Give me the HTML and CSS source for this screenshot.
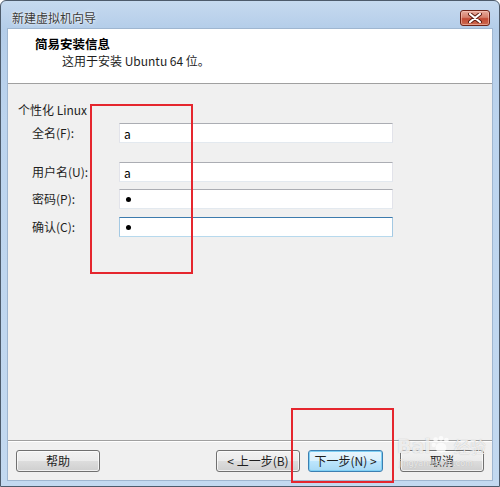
FILE: index.html
```html
<!DOCTYPE html>
<html lang="zh-CN">
<head>
<meta charset="utf-8">
<title>新建虚拟机向导</title>
<link rel="stylesheet" href="styles.css">
</head>
<body>
<div class="window">
  <div class="titlebar">
    <span class="title">新建虚拟机向导</span>
    <div class="close">
      <svg width="14" height="10" viewBox="0 0 14 10">
        <path d="M2 1 L12 9 M12 1 L2 9" stroke="#5a1a10" stroke-width="4" stroke-linecap="round"/>
        <path d="M2 1 L12 9 M12 1 L2 9" stroke="#ffffff" stroke-width="2.2" stroke-linecap="round"/>
      </svg>
    </div>
  </div>
  <div class="client">
    <div class="header">
      <div class="h-title">简易安装信息</div>
      <div class="h-sub">这用于安装 Ubuntu 64 位。</div>
    </div>
    <div class="content">
      <div class="group">个性化 Linux</div>
      <div class="form">
        <div class="row">
          <label class="lbl">全名(F):</label>
          <div class="field">a</div>
        </div>
        <div class="row row-wide">
          <label class="lbl">用户名(U):</label>
          <div class="field">a</div>
        </div>
        <div class="row">
          <label class="lbl">密码(P):</label>
          <div class="field"><span class="dot"></span></div>
        </div>
        <div class="row row-8">
          <label class="lbl">确认(C):</label>
          <div class="field focus"><span class="dot"></span></div>
        </div>
      </div>
    </div>
    <div class="footer">
      <button class="btn btn-help">帮助</button>
      <span class="spacer"></span>
      <button class="btn btn-back">&lt; 上一步(B)</button>
      <button class="btn btn-next">下一步(N) &gt;</button>
      <button class="btn btn-cancel">取消</button>
    </div>
  </div>
  <div class="mark mark-a"></div>
  <div class="mark mark-b"></div>
  <div class="watermark">
    <div class="wm-line">
      <span class="wm-big">Bai</span>
      <svg class="paw" width="20" height="18" viewBox="0 0 22 20">
        <circle cx="5" cy="4" r="2.6"/><circle cx="11" cy="2.6" r="2.6"/><circle cx="17" cy="4.5" r="2.6"/>
        <circle cx="3" cy="10" r="2.4"/><ellipse cx="11" cy="13" rx="6" ry="5.5"/>
      </svg>
      <span class="wm-cn">经验</span>
    </div>
    <div class="wm-url">jingyan.baidu.com</div>
  </div>
</div>
</body>
</html>
```

FILE: styles.css
```css
* { box-sizing: border-box; }
html, body {
  margin: 0;
  padding: 0;
  background: #ffffff;
}
body {
  font-family: "Noto Sans CJK SC", "DejaVu Sans", sans-serif;
  font-size: 12px;
  color: #1e1e1e;
}
.window {
  position: relative;
  width: 500px;
  height: 487px;
  border: 1px solid #4d5b6b;
  border-radius: 6px 6px 0 0;
  background: linear-gradient(to bottom, #c6daef 0px, #b4cde9 28px, #bcd4ee 120px, #c3d9f0 487px);
  padding: 0 7px 6px 7px;
  display: flex;
  flex-direction: column;
  overflow: hidden;
}
.titlebar {
  height: 28px;
  display: flex;
  justify-content: space-between;
  align-items: flex-start;
}
.title {
  padding: 9px 0 0 4px;
  line-height: 16px;
  font-size: 12px;
  color: #3a3a3a;
  text-shadow: 0 0 4px #e8f0f8, 0 0 2px #ffffff;
}
.close {
  margin: 9px 2px 0 0;
  width: 30px;
  height: 16px;
  border: 1px solid #6e2418;
  border-radius: 3px;
  background: linear-gradient(to bottom, #e7ab9c 0%, #d6806c 45%, #c24a34 55%, #cd6a4f 100%);
  box-shadow: inset 0 0 0 1px rgba(255,210,200,0.5);
  display: flex;
  align-items: center;
  justify-content: center;
}
.client {
  flex: 1;
  display: flex;
  flex-direction: column;
  background: #f0f0f0;
  outline: 1px solid #9fb6d0;
}
.header {
  height: 55px;
  background: #ffffff;
  border-bottom: 1px solid #a0a0a0;
  padding-top: 7px;
}
.h-title {
  padding-left: 27px;
  line-height: 16px;
  font-size: 12.5px;
  font-weight: bold;
  color: #000;
}
.h-sub {
  padding-left: 54px;
  margin-top: 1px;
  line-height: 16px;
  color: #1e1e1e;
}
.content {
  padding: 18px 0 0 10px;
}
.group {
  line-height: 16px;
  color: #1e1e1e;
}
.form {
  margin: 5px 0 0 14px;
}
.row {
  display: grid;
  grid-template-columns: 87px 274px;
  align-items: center;
  height: 20px;
}
.row + .row { margin-top: 7px; }
.row.row-wide { margin-top: 19px; }
.row.row-8 { margin-top: 8px; }
.lbl {
  line-height: 16px;
  color: #1e1e1e;
}
.field {
  height: 20px;
  background: #ffffff;
  border: 1px solid;
  border-color: #abadb3 #e2e3ea #e3e9ef #e2e3ea;
  padding-left: 4px;
  line-height: 17px;
  color: #000;
  display: flex;
  align-items: center;
}
.field.focus {
  border-color: #3d7bad #a4c9e3 #b7d9ed #a4c9e3;
}
.dot {
  display: inline-block;
  width: 5px;
  height: 5px;
  border-radius: 50%;
  background: #000;
  margin-left: 2px;
}
.footer {
  margin-top: auto;
  border-top: 1px solid #a0a0a0;
  box-shadow: inset 0 1px 0 #ffffff;
  padding: 9px 8px 8px 8px;
  display: flex;
  align-items: center;
}
.spacer { flex: 1; }
.btn {
  height: 22px;
  font-family: "Noto Sans CJK SC", "DejaVu Sans", sans-serif;
  font-size: 12px;
  color: #1e1e1e;
  border: 1px solid #707070;
  border-radius: 3px;
  background: linear-gradient(to bottom, #f2f2f2 0%, #ebebeb 50%, #dddddd 50%, #cfcfcf 100%);
  box-shadow: inset 0 0 0 1px rgba(255,255,255,0.7);
  padding: 0;
  line-height: 18px;
}
.btn-help { width: 84px; }
.btn-back { width: 84px; }
.btn-next {
  width: 75px;
  margin-left: 8px;
  border-color: #3c7fb1;
  box-shadow: inset 0 0 0 1px #7fd0f5;
  background: linear-gradient(to bottom, #eaf6fd 0%, #d9f0fc 50%, #bee6fd 50%, #a7d9f5 100%);
}
.btn-cancel {
  width: 84px;
  margin-left: 17px;
}
.mark {
  position: absolute;
  border: 2px solid #e5262e;
}
.mark-a {
  left: 89px;
  top: 103px;
  width: 103px;
  height: 170px;
}
.mark-b {
  left: 290px;
  top: 407px;
  width: 103px;
  height: 75px;
}
.watermark {
  position: absolute;
  left: 396px;
  top: 434px;
  color: rgba(255,255,255,0.75);
  text-shadow: 0 0 1px rgba(140,140,140,0.6);
  pointer-events: none;
}
.wm-line {
  display: flex;
  align-items: flex-end;
  line-height: 22px;
}
.paw {
  fill: rgba(255,255,255,0.75);
  margin: 0 1px 3px 0;
}
.wm-big {
  font-family: "DejaVu Sans", sans-serif;
  font-size: 19px;
  font-weight: bold;
}
.wm-cn {
  font-size: 16px;
  margin-left: 2px;
}
.wm-url {
  font-family: "DejaVu Sans", sans-serif;
  font-size: 8px;
  line-height: 9px;
  margin: 2px 0 0 2px;
  color: rgba(255,255,255,0.7);
}
```
